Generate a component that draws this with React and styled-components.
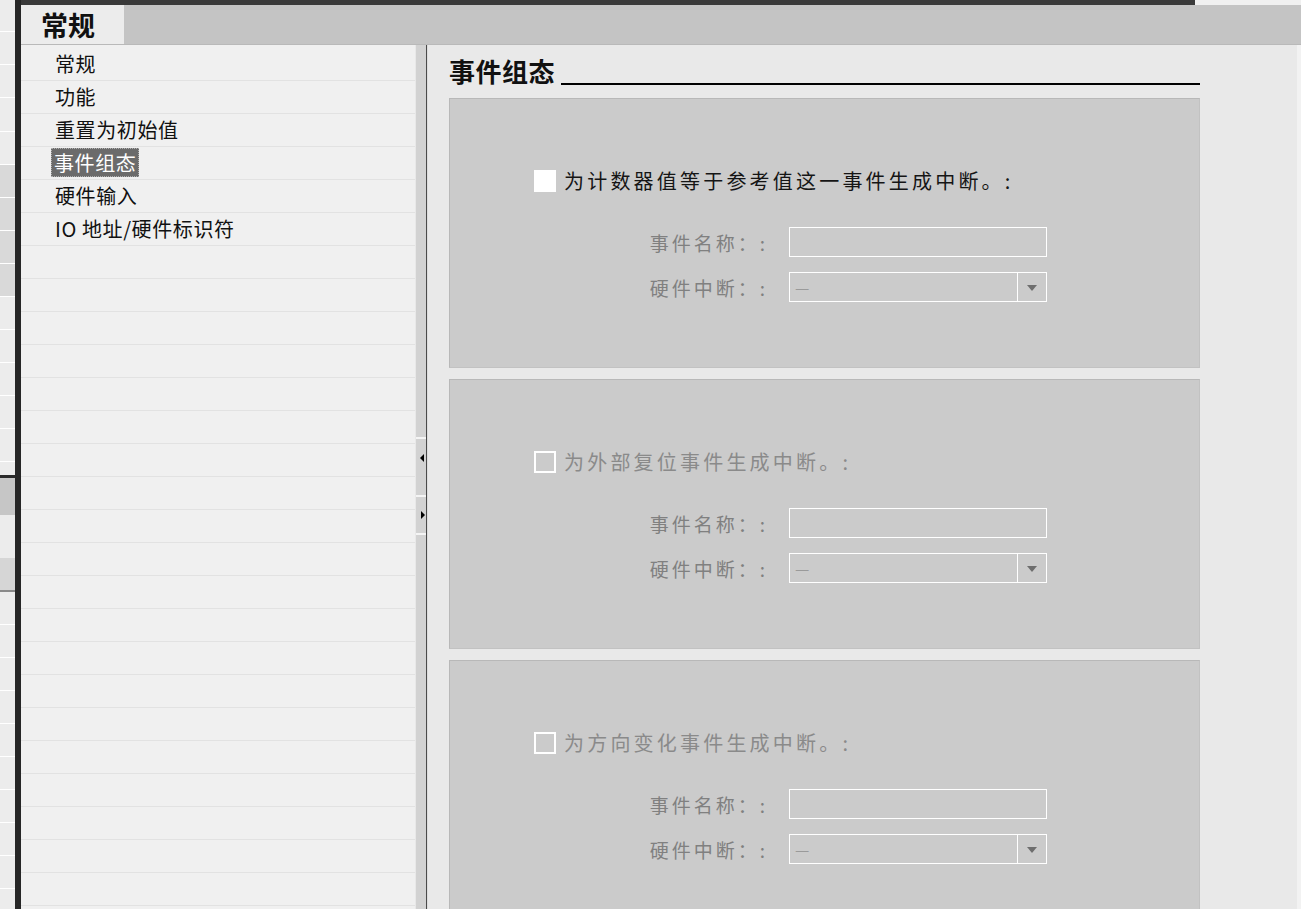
import React from "react";
import styled, { createGlobalStyle } from "styled-components";

const Global = createGlobalStyle`
  html, body { margin: 0; padding: 0; overflow: hidden; background: #f0f0f0; }
  body { font-family: "Noto Sans CJK SC", "Noto Sans", "Liberation Sans", sans-serif; }
  * { box-sizing: border-box; }
`;

const Frame = styled.div`
  display: flex;
  width: 1301px;
  height: 909px;
  overflow: hidden;
  background: #f0f0f0;
`;

const LeftStrip = styled.div`
  width: 15px;
  display: flex;
  flex-direction: column;
  overflow: hidden;
  background: #ececec;
`;

const StripCell = styled.div`
  flex: none;
  height: ${(p) => p.$h}px;
  background: ${(p) => p.$bg || "#ececec"};
  border-bottom: ${(p) => (p.$line ? `${p.$lw || 1}px solid ${p.$line}` : "none")};
`;

const DarkBar = styled.div`
  width: 6px;
  background: #262626;
  flex: none;
`;

const Main = styled.div`
  flex: 1;
  display: flex;
  flex-direction: column;
  min-width: 0;
`;

const TopEdge = styled.div`
  height: 5px;
  display: flex;
  flex: none;
`;

const TopDark = styled.div`
  width: 1174px;
  background: #3a3a3a;
`;

const TopLight = styled.div`
  flex: 1;
  background: #f0f0f0;
`;

const TabBar = styled.div`
  height: 40px;
  flex: none;
  display: flex;
  background: #c4c4c4;
  border-bottom: 1px solid #b9b9b9;
`;

const Tab = styled.div`
  width: 103px;
  background: #ececec;
  display: flex;
  align-items: center;
  padding-left: 20px;
  font-size: 27px;
  font-weight: 700;
  color: #111;
  line-height: 1;
`;

const Body = styled.div`
  flex: 1;
  display: flex;
  min-height: 0;
`;

const Nav = styled.div`
  width: 394px;
  flex: none;
  background: #f0f0f0;
  padding-top: 3px;
  display: flex;
  flex-direction: column;
  overflow: hidden;
`;

const NavRow = styled.div`
  flex: none;
  height: 33px;
  border-bottom: 1px solid #e2e2e2;
  padding-left: 34px;
  padding-bottom: 1px;
  display: flex;
  align-items: center;
  font-size: 20px;
  letter-spacing: 0.6px;
  color: #111;
  line-height: 1;
  white-space: nowrap;
`;

const Selected = styled.span`
  display: inline-flex;
  align-items: center;
  height: 29px;
  margin-left: -4px;
  padding: 0 3px 0 3px;
  background: #6b6b6b;
  color: #fff;
  outline: 1px dotted #b0b0b0;
  outline-offset: -1px;
`;

const Splitter = styled.div`
  width: 12px;
  flex: none;
  background: #d2d2d2;
  border-left: 1px solid #e8e8e8;
  border-right: 1px solid #4a4a4a;
  display: flex;
  flex-direction: column;
  padding-top: 392px;
`;

const SplitBtn = styled.div`
  height: ${(p) => p.$h}px;
  border-top: 2px solid #f4f4f4;
  border-bottom: ${(p) => (p.$last ? "2px solid #f4f4f4" : "none")};
  display: flex;
  align-items: center;
  padding-left: ${(p) => (p.$dir === "left" ? 4 : 5)}px;
`;

const Gap = styled.div`
  height: ${(p) => p.$h}px;
`;

const Arrow = styled.div`
  width: 0;
  height: 0;
  border-top: 4px solid transparent;
  border-bottom: 4px solid transparent;
  ${(p) =>
    p.$dir === "left"
      ? "border-right: 4px solid #000;"
      : "border-left: 4px solid #000;"}
`;

const Content = styled.div`
  flex: 1;
  background: #e9e9e9;
  border-left: 1px solid #dcdcdc;
  border-right: 4px solid #f2f2f2;
  padding-left: 21px;
  overflow: hidden;
`;

const Column = styled.div`
  width: 751px;
  display: flex;
  flex-direction: column;
`;

const Heading = styled.div`
  height: 41px;
  display: flex;
  align-items: flex-end;
`;

const HeadingText = styled.div`
  font-size: 26px;
  font-weight: 700;
  line-height: 30px;
  color: #111;
  letter-spacing: 0.5px;
`;

const HeadingLine = styled.div`
  flex: 1;
  height: 2px;
  background: #000;
  margin-left: 6px;
  margin-bottom: 1px;
`;

const Panels = styled.div`
  margin-top: 12px;
  display: flex;
  flex-direction: column;
  gap: 11px;
`;

const Panel = styled.div`
  flex: none;
  height: 270px;
  background: #cbcbcb;
  border: 1px solid #b8b8b8;
  border-right-color: #c2c2c2;
  border-bottom-color: #c2c2c2;
  padding: 71px 0 0 84px;
`;

const CheckRow = styled.div`
  display: flex;
  align-items: center;
  height: 22px;
`;

const Box = styled.div`
  width: 22px;
  height: 22px;
  flex: none;
  background: ${(p) => (p.$enabled ? "#ffffff" : "transparent")};
  border: 2px solid #ffffff;
`;

const CheckLabel = styled.div`
  margin-left: 8px;
  font-size: 20px;
  letter-spacing: 3.2px;
  line-height: 1;
  white-space: nowrap;
  color: ${(p) => (p.$enabled ? "#151515" : "#8a8a8a")};
`;

const Fields = styled.div`
  margin-top: 35px;
  margin-left: -84px;
  display: grid;
  grid-template-columns: 318px 258px;
  column-gap: 21px;
  row-gap: 15px;
`;

const FieldLabel = styled.div`
  height: 30px;
  display: flex;
  align-items: center;
  justify-content: flex-end;
  font-size: 19px;
  letter-spacing: 3px;
  color: #808080;
  white-space: nowrap;
  line-height: 1;
`;

const TextInput = styled.div`
  height: 30px;
  border: 1px solid #ffffff;
  background: #cbcbcb;
`;

const Select = styled.div`
  height: 30px;
  border: 1px solid #ffffff;
  display: flex;
`;

const SelectValue = styled.div`
  flex: 1;
  display: flex;
  align-items: center;
  padding-left: 5px;
  font-size: 16px;
  color: #9a9a9a;
`;

const SelectButton = styled.div`
  width: 29px;
  border-left: 1px solid #ffffff;
  display: flex;
  align-items: center;
  justify-content: center;
`;

const Caret = styled.div`
  width: 0;
  height: 0;
  border-left: 5px solid transparent;
  border-right: 5px solid transparent;
  border-top: 6px solid #6e6e6e;
  margin-top: 2px;
`;

const stripCells = [
  { h: 32, line: "#ffffff" },
  { h: 33, line: "#ffffff" },
  { h: 33, line: "#ffffff" },
  { h: 34, line: "#ffffff" },
  { h: 33, line: "#ffffff" },
  { h: 33, bg: "#d9d9d9", line: "#ffffff" },
  { h: 33, bg: "#d9d9d9", line: "#ffffff" },
  { h: 33, bg: "#d9d9d9", line: "#ffffff" },
  { h: 33, bg: "#d9d9d9", line: "#ffffff" },
  { h: 33, line: "#ffffff" },
  { h: 33, line: "#ffffff" },
  { h: 33, line: "#ffffff" },
  { h: 33, line: "#ffffff" },
  { h: 33, line: "#ffffff" },
  { h: 13 },
  { h: 3, bg: "#2a2a2a" },
  { h: 37, bg: "#c6c6c6" },
  { h: 43, bg: "#ececec" },
  { h: 34, bg: "#d6d6d6", line: "#8a8a8a", lw: 2 },
  { h: 33, line: "#ffffff" },
  { h: 33, line: "#ffffff" },
  { h: 33, line: "#ffffff" },
  { h: 33, line: "#ffffff" },
  { h: 33, line: "#ffffff" },
  { h: 33, line: "#ffffff" },
  { h: 33, line: "#ffffff" },
  { h: 33, line: "#ffffff" },
  { h: 33, line: "#ffffff" },
  { h: 33, line: "#ffffff" },
];

const navItems = ["常规", "功能", "重置为初始值", "事件组态", "硬件输入", "IO 地址/硬件标识符"];

const panels = [
  { label: "为计数器值等于参考值这一事件生成中断。:", enabled: true },
  { label: "为外部复位事件生成中断。:", enabled: false },
  { label: "为方向变化事件生成中断。:", enabled: false },
];

export default function App() {
  const rows = [];
  for (let i = 0; i < 27; i++) {
    const text = navItems[i];
    rows.push(
      <NavRow key={i}>
        {text === "事件组态" ? <Selected>{text}</Selected> : text || ""}
      </NavRow>
    );
  }

  return (
    <>
      <Global />
      <Frame>
        <LeftStrip>
          {stripCells.map((c, i) => (
            <StripCell key={i} $h={c.h} $bg={c.bg} $line={c.line} $lw={c.lw} />
          ))}
        </LeftStrip>
        <DarkBar />
        <Main>
          <TopEdge>
            <TopDark />
            <TopLight />
          </TopEdge>
          <TabBar>
            <Tab>常规</Tab>
          </TabBar>
          <Body>
            <Nav>{rows}</Nav>
            <Splitter>
              <SplitBtn $h={39} $dir="left">
                <Arrow $dir="left" />
              </SplitBtn>
              <Gap $h={19} />
              <SplitBtn $h={40} $dir="right" $last>
                <Arrow $dir="right" />
              </SplitBtn>
            </Splitter>
            <Content>
              <Column>
                <Heading>
                  <HeadingText>事件组态</HeadingText>
                  <HeadingLine />
                </Heading>
                <Panels>
                  {panels.map((p, i) => (
                    <Panel key={i}>
                      <CheckRow>
                        <Box $enabled={p.enabled} />
                        <CheckLabel $enabled={p.enabled}>{p.label}</CheckLabel>
                      </CheckRow>
                      <Fields>
                        <FieldLabel>事件名称：:</FieldLabel>
                        <TextInput />
                        <FieldLabel>硬件中断：:</FieldLabel>
                        <Select>
                          <SelectValue>—</SelectValue>
                          <SelectButton>
                            <Caret />
                          </SelectButton>
                        </Select>
                      </Fields>
                    </Panel>
                  ))}
                </Panels>
              </Column>
            </Content>
          </Body>
        </Main>
      </Frame>
    </>
  );
}
